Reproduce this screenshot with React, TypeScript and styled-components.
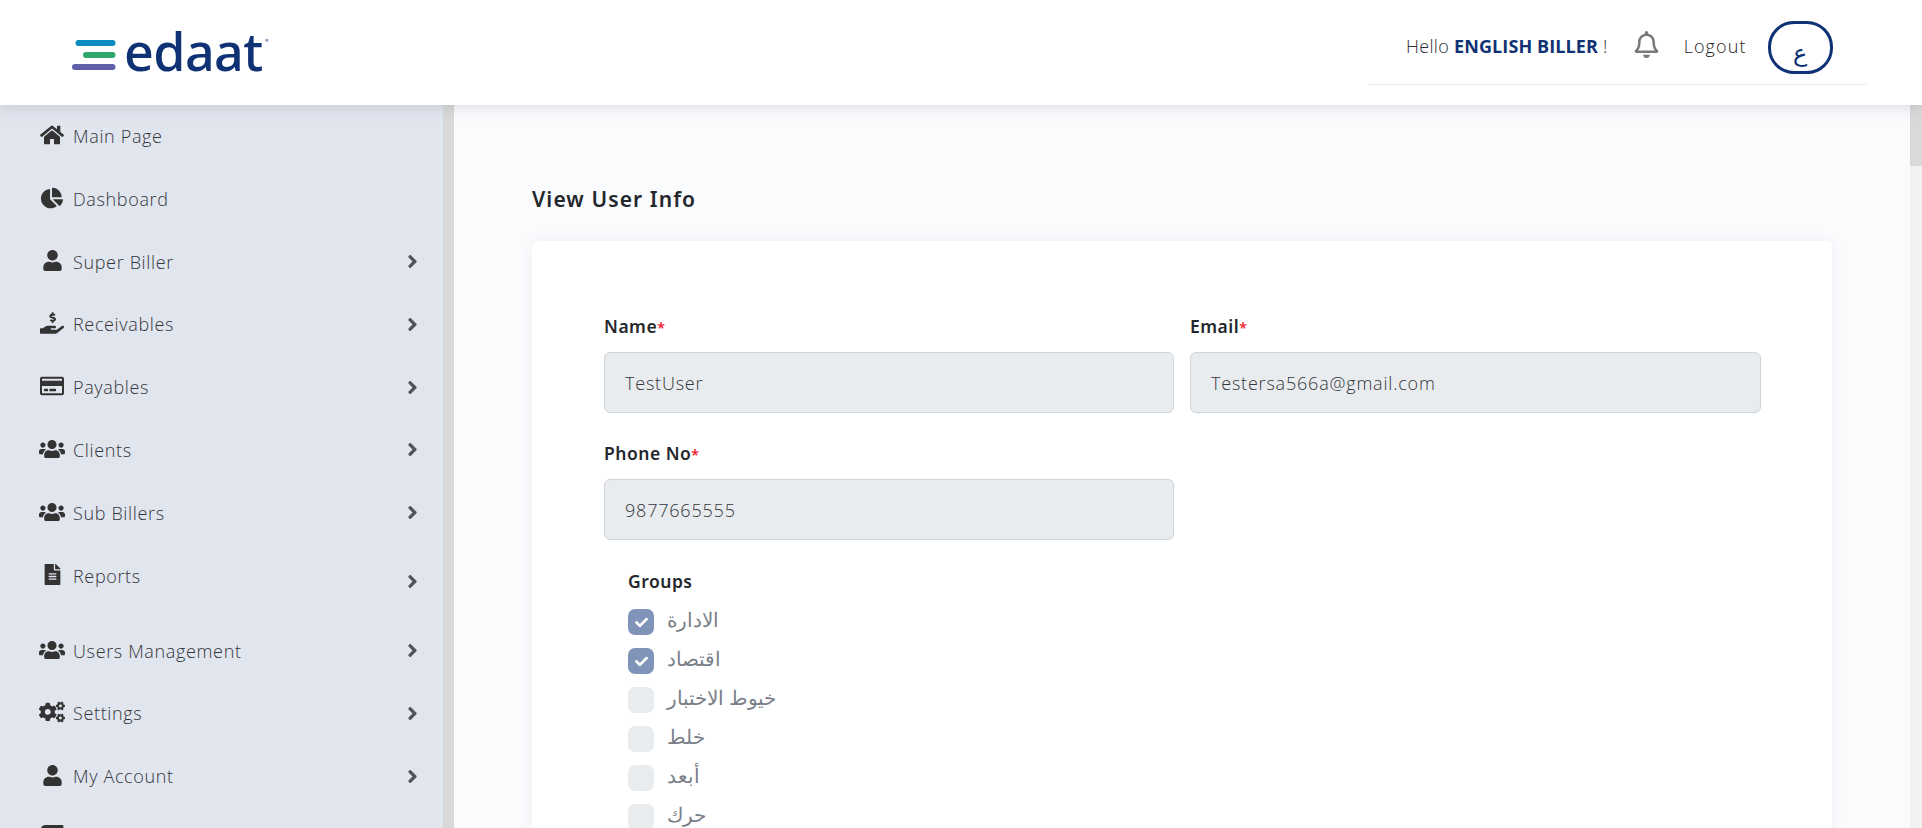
import React from 'react';
import styled, { createGlobalStyle } from 'styled-components';
import {
  FaHome,
  FaChartPie,
  FaUser,
  FaHandHoldingUsd,
  FaRegCreditCard,
  FaUsers,
  FaFileAlt,
  FaCogs,
  FaAngleRight,
  FaCheck,
  FaRegBell,
  FaBook,
} from 'react-icons/fa';

const GlobalStyle = createGlobalStyle`
  html, body {
    margin: 0;
    height: 100%;
    overflow: hidden;
    background: #fafbfd;
    font-family: 'Open Sans', 'Noto Sans', sans-serif;
  }
  * { box-sizing: border-box; }
`;

const Page = styled.div`
  display: flex;
  flex-direction: column;
  width: 1922px;
  height: 828px;
  overflow: hidden;
`;

const Header = styled.header`
  position: relative;
  z-index: 2;
  flex: 0 0 105px;
  display: flex;
  justify-content: space-between;
  background: #fff;
  box-shadow: 0 2px 14px rgba(60, 70, 90, 0.18);
`;

const Logo = styled.div`
  display: flex;
  align-items: center;
  gap: 6px;
  padding: 0 0 0 72px;
`;

const LogoBars = styled.svg`
  width: 46px;
  height: 32px;
  margin-top: 6px;
`;

const LogoText = styled.span`
  font-family: 'Noto Sans', sans-serif;
  font-size: 52px;
  line-height: 1;
  font-weight: 500;
  color: #0f3275;
  margin-top: -4px;
  letter-spacing: -0.6px;

  sup {
    font-size: 7px;
    color: #8b9cc0;
    vertical-align: 29px;
    line-height: 0;
    margin-left: 2px;
  }
`;

const UserBar = styled.div`
  display: flex;
  align-items: flex-start;
  width: 499px;
  height: 85px;
  margin-right: 55px;
  padding: 21px 0 0 38px;
  border-bottom: 1px solid #e7ebf0;
`;

const Hello = styled.span`
  margin-top: 12px;
  font-size: 18px;
  line-height: 26px;
  font-weight: 300;
  letter-spacing: 0.3px;
  color: #2b2e33;
  white-space: nowrap;

  b {
    color: #0f3275;
    font-weight: 700;
    letter-spacing: 0.1px;
  }
`;

const BellButton = styled.span`
  display: flex;
  margin: 10px 0 0 25px;
  font-size: 27px;
  color: #77797c;
`;

const Logout = styled.span`
  margin: 12px 0 0 24px;
  font-size: 18px;
  line-height: 26px;
  font-weight: 300;
  letter-spacing: 1.1px;
  color: #1f2227;
`;

const LangPill = styled.span`
  display: flex;
  justify-content: center;
  align-items: flex-end;
  width: 65px;
  height: 53px;
  margin-left: 21px;
  padding-bottom: 6px;
  border: 3px solid #0f3275;
  border-radius: 26px;
  color: #0f3275;
  font-family: 'DejaVu Sans', sans-serif;
  font-size: 24px;
  line-height: 1;
`;

const Body = styled.div`
  flex: 1;
  display: flex;
  min-height: 0;
`;

const Sidebar = styled.nav`
  flex: 0 0 454px;
  overflow: hidden;
  background: #e1e5ee;
  border-right: 11px solid #d9d9d9;
`;

const NavRow = styled.div<{ $tall?: boolean }>`
  display: flex;
  align-items: flex-start;
  height: ${({ $tall }) => ($tall ? 75 : 62.8)}px;
  padding: 0 20px 0 38px;
  color: #3f4247;
`;

const NavIcon = styled.span<{ $size: number }>`
  flex: 0 0 28px;
  display: flex;
  justify-content: center;
  align-items: center;
  height: 24px;
  margin-top: 18px;
  font-size: ${({ $size }) => $size}px;
  color: #333;
`;

const NavLabel = styled.span`
  flex: 1;
  margin: 19px 0 0 7px;
  font-size: 18px;
  font-weight: 300;
  line-height: 24px;
  letter-spacing: 0.65px;
  color: #33363b;
`;

const NavArrow = styled.span<{ $low?: boolean }>`
  display: flex;
  align-items: center;
  height: 24px;
  margin-top: ${({ $low }) => ($low ? 25 : 19)}px;
  font-size: 21px;
  color: #50535a;
`;

const Main = styled.main`
  flex: 1;
  min-width: 0;
  padding: 78px 78px 0 78px;
  overflow: hidden;
  background: #fafbfd;
`;

const ScrollTrack = styled.div`
  flex: 0 0 12px;
  background: #f1f1f1;
`;

const ScrollThumb = styled.div`
  height: 61px;
  background: #d9d9d9;
`;

const Heading = styled.h1`
  margin: 0 0 26px;
  font-family: 'Noto Sans', sans-serif;
  font-size: 21px;
  line-height: 32px;
  font-weight: 600;
  letter-spacing: 1.1px;
  color: #24272c;
`;

const Card = styled.section`
  height: 640px;
  padding: 73px 70px 0 72px;
  background: #fff;
  border-radius: 6px;
  box-shadow: 0 0 14px rgba(60, 70, 90, 0.06);
`;

const FieldGrid = styled.div`
  display: grid;
  grid-template-columns: 570px 571px;
  column-gap: 16px;
  row-gap: 28px;
`;

const Field = styled.div`
  display: flex;
  flex-direction: column;
`;

const FieldLabel = styled.label`
  margin-bottom: 12px;
  font-family: 'Noto Sans', sans-serif;
  font-size: 17.5px;
  line-height: 24px;
  font-weight: 600;
  letter-spacing: 0.5px;
  color: #24272c;

  em {
    color: #f01c2c;
    font-size: 14px;
    font-style: normal;
    letter-spacing: 0;
  }
`;

const FieldValue = styled.div`
  display: flex;
  align-items: center;
  height: 61px;
  padding: 0 20px;
  background: #e9ecef;
  border: 1px solid #ced4da;
  border-radius: 6px;
  font-size: 18px;
  font-weight: 300;
  letter-spacing: 0.8px;
  color: #33363b;
`;

const Groups = styled.div`
  margin: 29px 0 0 24px;
`;

const GroupsTitle = styled.div`
  margin-bottom: 16px;
  font-family: 'Noto Sans', sans-serif;
  font-size: 17.5px;
  line-height: 24px;
  font-weight: 600;
  letter-spacing: 0.5px;
  color: #24272c;
`;

const CheckRow = styled.div`
  display: flex;
  align-items: flex-start;
  gap: 13px;
  height: 39px;
`;

const CheckBox = styled.span<{ $checked?: boolean }>`
  display: flex;
  justify-content: center;
  align-items: center;
  width: 26px;
  height: 26px;
  border-radius: 7px;
  font-size: 13px;
  color: #fff;
  background: ${({ $checked }) => ($checked ? '#7f94b8' : '#e9ecef')};
`;

const CheckLabel = styled.span`
  font-family: 'Noto Sans', 'DejaVu Sans', sans-serif;
  font-size: 20px;
  font-weight: 300;
  line-height: 22px;
  color: #7a8088;
`;

const navItems = [
  { label: 'Main Page', icon: <FaHome />, size: 24 },
  { label: 'Dashboard', icon: <FaChartPie />, size: 22 },
  { label: 'Super Biller', icon: <FaUser />, size: 21, arrow: true },
  { label: 'Receivables', icon: <FaHandHoldingUsd />, size: 24, arrow: true },
  { label: 'Payables', icon: <FaRegCreditCard />, size: 24, arrow: true },
  { label: 'Clients', icon: <FaUsers />, size: 26, arrow: true },
  { label: 'Sub Billers', icon: <FaUsers />, size: 26, arrow: true },
  { label: 'Reports', icon: <FaFileAlt />, size: 21, arrow: true, tall: true },
  { label: 'Users Management', icon: <FaUsers />, size: 26, arrow: true },
  { label: 'Settings', icon: <FaCogs />, size: 26, arrow: true },
  { label: 'My Account', icon: <FaUser />, size: 21, arrow: true },
  { label: '', icon: <FaBook />, size: 26 },
];

const groups = [
  { label: 'الادارة', checked: true },
  { label: 'اقتصاد', checked: true },
  { label: 'خيوط الاختبار' },
  { label: 'خلط' },
  { label: 'أبعد' },
  { label: 'حرك' },
];

export default function App() {
  return (
    <Page>
      <GlobalStyle />
      <Header>
        <Logo>
          <LogoBars viewBox="0 0 46 32">
            <rect x="3.5" y="0" width="40" height="6" rx="3" fill="#0b8dc0" />
            <rect x="11" y="12" width="32.5" height="6" rx="3" fill="#2fa66a" />
            <rect x="0" y="24" width="43.5" height="6" rx="3" fill="#6060aa" />
          </LogoBars>
          <LogoText>
            edaat<sup>●</sup>
          </LogoText>
        </Logo>
        <UserBar>
          <Hello>
            Hello <b>ENGLISH BILLER</b> !
          </Hello>
          <BellButton>
            <FaRegBell />
          </BellButton>
          <Logout>Logout</Logout>
          <LangPill>ع</LangPill>
        </UserBar>
      </Header>
      <Body>
        <Sidebar>
          {navItems.map((item, i) => (
            <NavRow key={i} $tall={item.tall}>
              <NavIcon $size={item.size}>{item.icon}</NavIcon>
              <NavLabel>{item.label}</NavLabel>
              {item.arrow && (
                <NavArrow $low={item.tall}>
                  <FaAngleRight />
                </NavArrow>
              )}
            </NavRow>
          ))}
        </Sidebar>
        <Main>
          <Heading>View User Info</Heading>
          <Card>
            <FieldGrid>
              <Field>
                <FieldLabel>
                  Name<em>*</em>
                </FieldLabel>
                <FieldValue>TestUser</FieldValue>
              </Field>
              <Field>
                <FieldLabel>
                  Email<em>*</em>
                </FieldLabel>
                <FieldValue>Testersa566a@gmail.com</FieldValue>
              </Field>
              <Field>
                <FieldLabel>
                  Phone No<em>*</em>
                </FieldLabel>
                <FieldValue>9877665555</FieldValue>
              </Field>
            </FieldGrid>
            <Groups>
              <GroupsTitle>Groups</GroupsTitle>
              {groups.map((g) => (
                <CheckRow key={g.label}>
                  <CheckBox $checked={g.checked}>{g.checked && <FaCheck />}</CheckBox>
                  <CheckLabel>{g.label}</CheckLabel>
                </CheckRow>
              ))}
            </Groups>
          </Card>
        </Main>
        <ScrollTrack>
          <ScrollThumb />
        </ScrollTrack>
      </Body>
    </Page>
  );
}
